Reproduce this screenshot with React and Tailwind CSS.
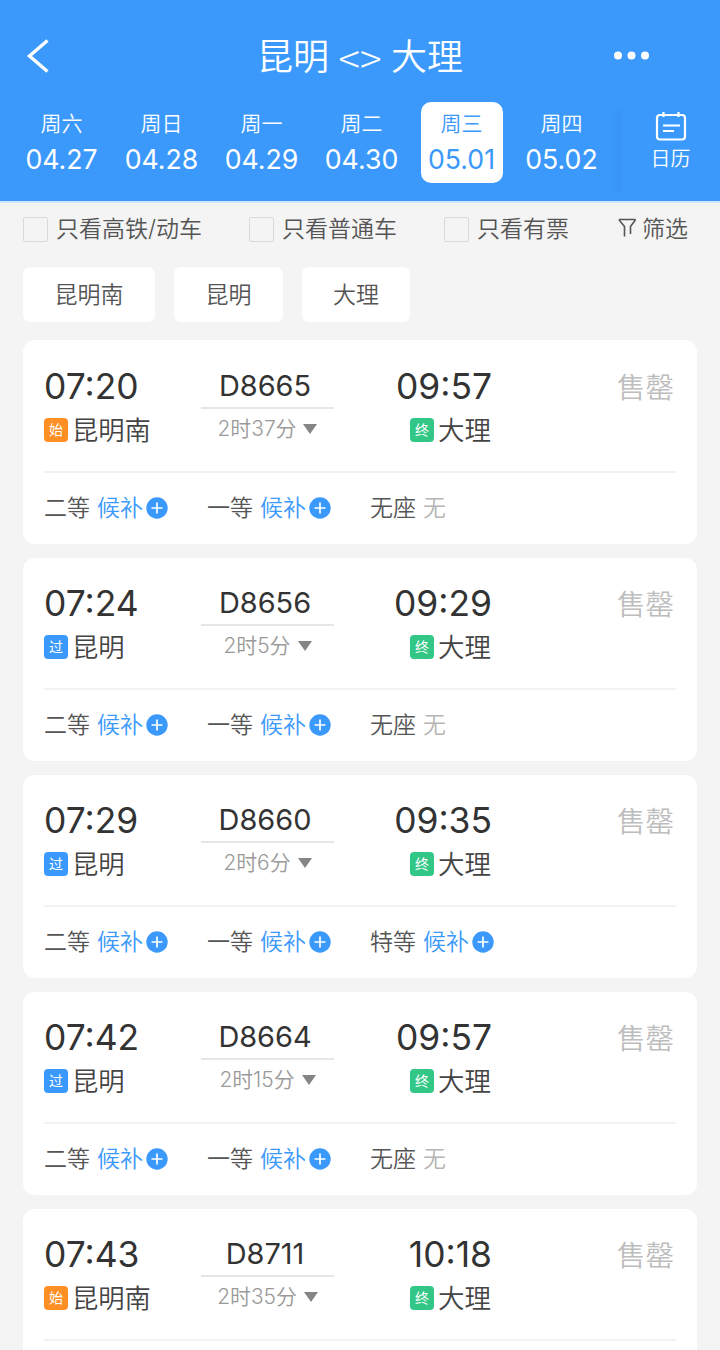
const days = [
  ['周六', '04.27'],
  ['周日', '04.28'],
  ['周一', '04.29'],
  ['周二', '04.30'],
  ['周三', '05.01'],
  ['周四', '05.02'],
];

const trains = [
  { dep: '07:20', from: '昆明南', tag: '始', no: 'D8665', dur: '2时37分', arr: '09:57', seats: ['二等', '一等', '无座'] },
  { dep: '07:24', from: '昆明', tag: '过', no: 'D8656', dur: '2时5分', arr: '09:29', seats: ['二等', '一等', '无座'] },
  { dep: '07:29', from: '昆明', tag: '过', no: 'D8660', dur: '2时6分', arr: '09:35', seats: ['二等', '一等', '特等'] },
  { dep: '07:42', from: '昆明', tag: '过', no: 'D8664', dur: '2时15分', arr: '09:57', seats: ['二等', '一等', '无座'] },
  { dep: '07:43', from: '昆明南', tag: '始', no: 'D8711', dur: '2时35分', arr: '10:18', seats: [] },
];

const tagColors = { 始: 'bg-[#fd8f24]', 过: 'bg-[#3b99fc]', 终: 'bg-[#33c787]' };

function Header() {
  return (
    <header className="h-[203px] shrink-0 border-b-2 border-[#cfe5fd] bg-[#3b99fc] text-white">
      <div className="flex h-[102px] items-center pt-[10px]">
        <div className="w-[180px] pl-[26px]">
          <svg className="h-[36px] w-[24px]" viewBox="0 0 24 36" fill="none" stroke="currentColor" strokeWidth="3.4">
            <path d="M21.500 2.500 L3.500 18 L21.500 33.500" />
          </svg>
        </div>
        <h1 className="flex flex-1 items-center justify-center gap-[9.500px] pt-[2px] text-[36px] leading-[44px] font-[350] whitespace-nowrap">
          <span>昆明</span>
          <span className="font-['Noto_Sans_CJK_SC',sans-serif] text-[40px] leading-[44px] font-light">&lt;&gt;</span>
          <span>大理</span>
        </h1>
        <div className="w-[180px] pl-[73px]">
          <svg className="h-[10px] w-[38px]" viewBox="0 0 38 10" fill="currentColor">
            <circle cx="5" cy="4.500" r="4" />
            <circle cx="18.500" cy="4.500" r="4" />
            <circle cx="32" cy="4.500" r="4" />
          </svg>
        </div>
      </div>
      <div className="flex pl-[12px]">
        {days.map(([week, date]) => (
          <div key={date} className="flex w-[100px] justify-center">
            <div className={'flex h-[81px] w-[82px] flex-col items-center rounded-[10px] pt-[9px] ' + (date === '05.01' ? 'bg-white text-[#3b99fc]' : '')}>
              <span className="pr-[1px] text-[21px] leading-[26px] font-[350]">{week}</span>
              <span className="mt-[9px] pr-[1px] text-[26.700px] leading-[26px] whitespace-nowrap">{date}</span>
            </div>
          </div>
        ))}
        <div className="mt-[8px] h-[82px] w-[9px] bg-linear-to-r from-[#3b99fc] to-[#3894f6]" />
        <div className="flex flex-1 flex-col items-center pt-[9px]">
          <svg className="h-[30px] w-[32px]" viewBox="0 0 32 30" fill="none" stroke="currentColor" strokeWidth="2.2">
            <rect x="2" y="4" width="28" height="24.500" rx="3" />
            <path d="M8.500 1v5M23.500 1v5M8 14.500h17M8 20h11" />
          </svg>
          <span className="mt-[5px] text-[20px] leading-[26px] font-[350]">日历</span>
        </div>
      </div>
    </header>
  );
}

function Check({ label, className }) {
  return (
    <div className={'flex items-center ' + className}>
      <span className="mr-[8px] h-[25px] w-[25px] rounded-[2px] border-[1.500px] border-[#d9d9d9]" />
      <span className="whitespace-nowrap">{label}</span>
    </div>
  );
}

function Filters() {
  return (
    <div className="flex h-[52px] shrink-0 items-center pl-[23px] text-[23px] leading-[30px] font-[350] text-[#555]">
      <Check label="只看高铁/动车" className="w-[226px]" />
      <Check label="只看普通车" className="w-[195px]" />
      <Check label="只看有票" className="w-[174px]" />
      <svg className="mr-[5px] -mt-[3px] h-[20px] w-[19px]" viewBox="0 0 19 20" fill="none" stroke="currentColor" strokeWidth="1.6">
        <path d="M6.500 18.500v-10l-5-6v-1h15.500v1l-4.500 6v7.500" />
      </svg>
      <span>筛选</span>
    </div>
  );
}

function Tag({ kind }) {
  return (
    <span className={'flex h-[24px] w-[24px] shrink-0 items-center justify-center rounded-[4px] text-[14px] leading-[24px] text-white ' + tagColors[kind]}>
      {kind}
    </span>
  );
}

function Seat({ name }) {
  return (
    <div className="flex w-[163px] items-center">
      <span className="mr-[7px] text-[#555]">{name}</span>
      {name === '无座' ? (
        <span className="text-[#b5b5b5]">无</span>
      ) : (
        <>
          <span className="text-[#3b99fc]">候补</span>
          <svg className="ml-[3px] h-[22px] w-[22px]" viewBox="0 0 22 22">
            <circle cx="11" cy="11" r="10.700" fill="#3b99fc" />
            <path d="M11 5.500v11M5.500 11h11" stroke="#fff" strokeWidth="1.700" />
          </svg>
        </>
      )}
    </div>
  );
}

function TrainCard({ t, first }) {
  return (
    <article className={'shrink-0 rounded-[12px] bg-white px-[21px] ' + (first ? 'h-[204px] pt-[24px]' : 'h-[203px] pt-[23px]')}>
      <div className="flex h-[107px]">
        <div className="w-[157px]">
          <div className="text-[35.400px] leading-[46px] text-[#333]">{t.dep}</div>
          <div className="flex h-[39px] items-center gap-[4px]">
            <Tag kind={t.tag} />
            <span className="pt-[3px] text-[26.300px] font-[350] text-[#444]">{t.from}</span>
          </div>
        </div>
        <div className="w-[133px] text-center">
          <div className="h-[43px] pr-[5px] text-[28.900px] leading-[43px] text-[#333]">{t.no}</div>
          <div className="h-[2px] bg-[#e6e6e6]" />
          <div className="flex h-[40px] items-center justify-center gap-[7px] text-[20.900px] font-[350] text-[#999]">
            <span>{t.dur}</span>
            <svg className="h-[10px] w-[14px]" viewBox="0 0 14 10" fill="#858585">
              <path d="M0 0h14L7 10z" />
            </svg>
          </div>
        </div>
        <div className="w-[158px]">
          <div className="text-right text-[35.400px] leading-[46px] text-[#333]">{t.arr}</div>
          <div className="flex h-[39px] items-center justify-end gap-[4px]">
            <Tag kind="终" />
            <span className="pt-[3px] pr-[1px] text-[26.500px] font-[350] text-[#444]">大理</span>
          </div>
        </div>
        <div className="flex-1 pr-[2px] text-right text-[28.500px] leading-[48px] font-[350] text-[#bdbdbd]">售罄</div>
      </div>
      <div className="h-[2px] bg-[#f2f2f2]" />
      <div className="flex h-[70px] items-center text-[23px] leading-[30px] font-[350]">
        {t.seats.map((s) => (
          <Seat key={s} name={s} />
        ))}
      </div>
    </article>
  );
}

export default function App() {
  return (
    <div className="flex h-[1350px] w-[720px] flex-col overflow-hidden bg-[#f4f4f4] font-['Inter','Noto_Sans_CJK_SC',sans-serif]">
      <Header />
      <Filters />
      <div className="mt-[12px] flex gap-[19px] px-[23px] text-[23px] leading-[56px] font-[350] text-[#555]">
        <span className="h-[55px] w-[132px] rounded-[7px] bg-white text-center">昆明南</span>
        <span className="h-[55px] w-[109px] rounded-[7px] bg-white text-center">昆明</span>
        <span className="h-[55px] w-[108px] rounded-[7px] bg-white text-center">大理</span>
      </div>
      <main className="mt-[18px] flex flex-1 flex-col gap-[14px] overflow-hidden px-[23px]">
        {trains.map((t, i) => (
          <TrainCard key={t.dep} t={t} first={i === 0} />
        ))}
      </main>
    </div>
  );
}
